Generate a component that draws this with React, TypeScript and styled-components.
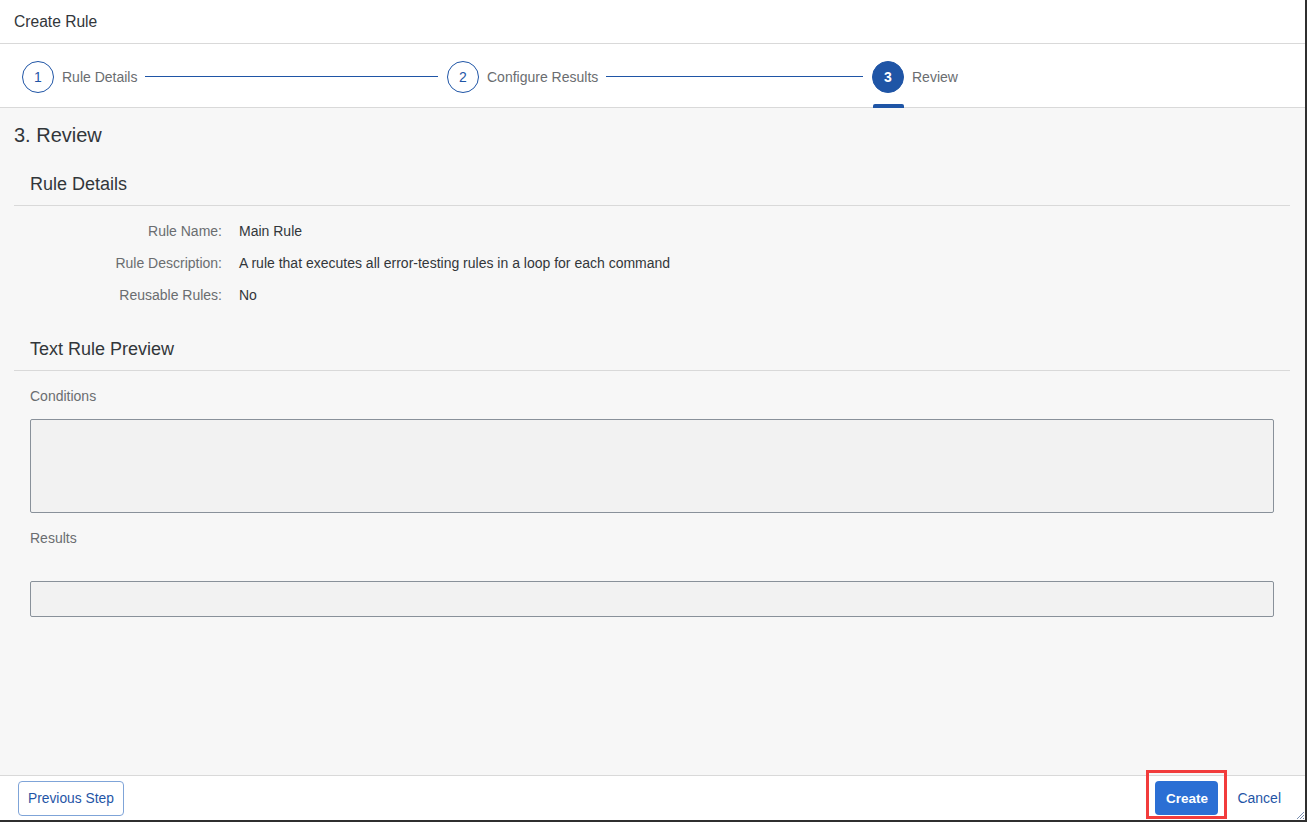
import * as React from 'react';
import styled, { createGlobalStyle } from 'styled-components';

const BLUE = '#1f55a6';

const GlobalStyle = createGlobalStyle`
    html, body {
        margin: 0;
        padding: 0;
        background: #2f2f2f;
        font-family: "Liberation Sans", Arial, sans-serif;
    }
`;

type Step = { num: number; label: string };

const steps: Step[] = [
    { num: 1, label: 'Rule Details' },
    { num: 2, label: 'Configure Results' },
    { num: 3, label: 'Review' },
];

const details = [
    { label: 'Rule Name:', value: 'Main Rule' },
    { label: 'Rule Description:', value: 'A rule that executes all error-testing rules in a loop for each command' },
    { label: 'Reusable Rules:', value: 'No' },
];

export default function App() {
    const current = 3;
    return (
        <>
            <GlobalStyle />
            <Dialog>
                <Header>Create Rule</Header>
                <WizardNav>
                    {steps.map((s, i) => (
                        <StepItem key={s.num} last={i === steps.length - 1}>
                            <StepCircle active={s.num === current}>
                                {s.num}
                                {s.num === current && <ActiveBar />}
                            </StepCircle>
                            <StepLabel>{s.label}</StepLabel>
                            {i < steps.length - 1 && <StepLine />}
                        </StepItem>
                    ))}
                </WizardNav>
                <Content>
                    <PageTitle>3. Review</PageTitle>
                    <SectionHeader>Rule Details</SectionHeader>
                    <DetailGrid>
                        {details.map((d) => (
                            <React.Fragment key={d.label}>
                                <DetailLabel>{d.label}</DetailLabel>
                                <DetailValue>{d.value}</DetailValue>
                            </React.Fragment>
                        ))}
                    </DetailGrid>
                    <SectionHeader top={14}>Text Rule Preview</SectionHeader>
                    <FieldLabel>Conditions</FieldLabel>
                    <PreviewBox height={94} />
                    <FieldLabel bottom={20}>Results</FieldLabel>
                    <PreviewBox height={36} />
                </Content>
                <Footer>
                    <GhostButton>Previous Step</GhostButton>
                    <FooterRight>
                        <Highlight>
                            <PrimaryButton>Create</PrimaryButton>
                            <HighlightFrame />
                        </Highlight>
                        <TextButton>Cancel</TextButton>
                    </FooterRight>
                    <ResizeHandle width="10" height="10" viewBox="0 0 10 10">
                        <path d="M9 2 L2 9 M9 5 L5 9 M9 8 L8 9" stroke="#7a8fb0" strokeWidth="1" />
                    </ResizeHandle>
                </Footer>
            </Dialog>
        </>
    );
}

const Dialog = styled.div`
    width: 1305px;
    height: 820px;
    background: #f7f7f7;
    display: flex;
    flex-direction: column;
    overflow: hidden;
`;

const Header = styled.div`
    height: 43px;
    line-height: 43px;
    padding-left: 14px;
    background: #fff;
    border-bottom: 1px solid #d9d9d9;
    box-shadow: 0 1px 2px rgba(0, 0, 0, 0.06);
    font-size: 15.6px;
    color: #32363a;
    flex-shrink: 0;
`;

const WizardNav = styled.div`
    box-sizing: border-box;
    height: 64px;
    padding-top: 2px;
    background: #fff;
    border-bottom: 1px solid #d9d9d9;
    display: flex;
    align-items: center;
    padding-left: 22px;
    flex-shrink: 0;
`;

const StepItem = styled.div<{ last?: boolean }>`
    width: ${(p) => (p.last ? 'auto' : '425px')};
    display: flex;
    align-items: center;
`;

const StepCircle = styled.div<{ active?: boolean }>`
    position: relative;
    width: 32px;
    height: 32px;
    box-sizing: border-box;
    border-radius: 50%;
    border: 1px solid ${BLUE};
    background: ${(p) => (p.active ? BLUE : '#fff')};
    color: ${(p) => (p.active ? '#fff' : BLUE)};
    font-size: 14px;
    font-weight: ${(p) => (p.active ? 700 : 400)};
    display: flex;
    align-items: center;
    justify-content: center;
    flex-shrink: 0;
`;

const ActiveBar = styled.span`
    position: absolute;
    left: 0;
    top: 42px;
    width: 31px;
    height: 4px;
    border-radius: 2px 2px 0 0;
    background: ${BLUE};
`;

const StepLabel = styled.span`
    margin-left: 8px;
    font-size: 14px;
    color: #6a6d70;
    white-space: nowrap;
`;

const StepLine = styled.div`
    flex: 1;
    height: 1px;
    background: ${BLUE};
    margin: 0 9px 0 8px;
`;

const Content = styled.div`
    flex: 1;
    padding: 15px 15px 0 14px;
    display: flex;
    flex-direction: column;
`;

const PageTitle = styled.div`
    height: 24px;
    line-height: 24px;
    font-size: 20px;
    color: #32363a;
`;

const SectionHeader = styled.div<{ top?: number }>`
    margin-top: ${(p) => p.top ?? 13}px;
    height: 41px;
    padding-top: 4px;
    line-height: 41px;
    padding-left: 16px;
    font-size: 18px;
    color: #32363a;
    border-bottom: 1px solid #d9d9d9;
`;

const DetailGrid = styled.div`
    display: grid;
    grid-template-columns: 208px 1fr;
    column-gap: 17px;
    grid-auto-rows: 32px;
    align-items: center;
    padding-top: 9px;
    font-size: 14px;
`;

const DetailLabel = styled.div`
    text-align: right;
    color: #6a6d70;
`;

const DetailValue = styled.div`
    color: #32363a;
`;

const FieldLabel = styled.div<{ bottom?: number }>`
    height: 48px;
    line-height: 50px;
    padding-left: 16px;
    margin-bottom: ${(p) => p.bottom ?? 0}px;
    font-size: 14px;
    color: #6a6d70;
`;

const PreviewBox = styled.div<{ height: number }>`
    height: ${(p) => p.height}px;
    box-sizing: border-box;
    margin: 0 16px;
    background: #f2f2f2;
    border: 1px solid #89919a;
    border-radius: 2px;
`;

const Footer = styled.div`
    position: relative;
    height: 44px;
    background: #fff;
    border-top: 1px solid #d9d9d9;
    display: flex;
    align-items: center;
    justify-content: space-between;
    padding: 0 14px 0 18px;
    flex-shrink: 0;
`;

const FooterRight = styled.div`
    display: flex;
    align-items: center;
    gap: 9px;
`;

const GhostButton = styled.button`
    height: 35px;
    padding: 0 9px;
    background: #fff;
    border: 1px solid #7fa4d8;
    border-radius: 4px;
    color: ${BLUE};
    font-family: "Liberation Sans", Arial, sans-serif;
    font-size: 13.8px;
`;

const PrimaryButton = styled.button`
    height: 34px;
    width: 63px;
    padding: 0;
    background: #2b6fd4;
    border: none;
    border-radius: 4px;
    color: #fff;
    font-family: "Liberation Sans", Arial, sans-serif;
    font-size: 13.5px;
    font-weight: 700;
`;

const TextButton = styled.button`
    height: 34px;
    padding: 0 10px;
    background: transparent;
    border: none;
    color: ${BLUE};
    font-family: "Liberation Sans", Arial, sans-serif;
    font-size: 14px;
`;

const Highlight = styled.div`
    position: relative;
    display: flex;
`;

const HighlightFrame = styled.div`
    position: absolute;
    top: -11px;
    bottom: -4px;
    left: -9px;
    right: -9px;
    border: 3px solid #f23c3c;
    pointer-events: none;
`;

const ResizeHandle = styled.svg`
    position: absolute;
    right: 0;
    bottom: 0;
`;
